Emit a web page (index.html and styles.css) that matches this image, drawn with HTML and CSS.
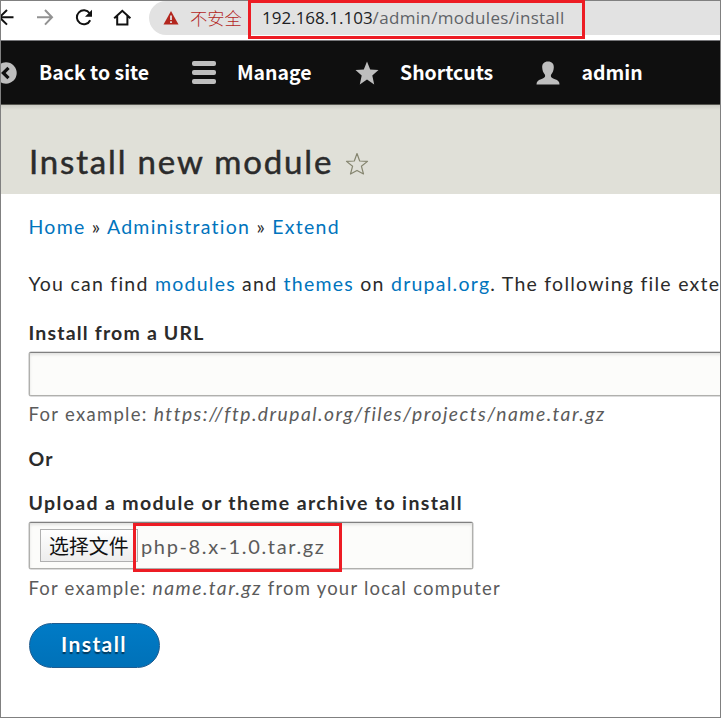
FILE: index.html
```
<!DOCTYPE html>
<html lang="en">
<head>
<meta charset="utf-8">
<title>Install new module</title>
<link rel="stylesheet" href="styles.css">
</head>
<body>
<div class="window">
  <div class="browser">
    <svg class="nav" width="132" height="40" viewBox="0 0 132 40" fill="none" stroke="#111" stroke-width="2">
      <path d="M13.500 17.300H-1M7 10L-.5 17.300L7 24.600"/>
      <path stroke="#929292" d="M37 17.300H51.500M45 10L52 17.300L45 24.600"/>
      <path d="M89.600 13.300A7 7 0 1 0 90.200 20.300"/>
      <path fill="#111" stroke="none" d="M92 9.800V16.800H85z"/>
      <path d="M114.200 18.300L122.300 10.800L130.400 18.300M117.200 16V24.500H127.400V16"/>
    </svg>
    <div class="omnibox">
      <svg class="warn" width="16" height="14" viewBox="0 0 16 14"><path fill="#b3261e" d="M8 0L15.500 13.500H.5z"/><path stroke="#e2e2e2" stroke-width="1.800" d="M8 4.500V9M8 10.200V12"/></svg>
      <span class="insecure" lang="zh">不安全</span>
      <span class="address"><span class="host">192.168.1.103</span><span class="path">/admin/modules/install</span></span>
    </div>
  </div>
  <nav class="toolbar">
    <a class="tab back"><svg width="17" height="22" viewBox="0 0 17 22"><circle cx="6" cy="11" r="10.700" fill="#bebebe"/><path d="M8.500 5.800L3.300 11L8.500 16.200" fill="none" stroke="#0f0f0f" stroke-width="3.200"/></svg><span>Back to site</span></a>
    <a class="tab manage"><svg width="26" height="24" viewBox="0 0 26 24"><g fill="#bebebe"><rect x="1" y="0" width="24" height="5" rx="2"/><rect x="1" y="9" width="24" height="5" rx="2"/><rect x="1" y="18" width="24" height="5" rx="2"/></g></svg><span>Manage</span></a>
    <a class="tab shortcuts"><svg width="24" height="24" viewBox="0 0 24 24"><path fill="#bebebe" d="M12 .5L15.200 8.400L23.500 9L17.300 14.500L19.200 23.500L12 18.600L4.800 23.500L6.700 14.500L.5 9L8.800 8.400z"/></svg><span>Shortcuts</span></a>
    <a class="tab user"><svg width="24" height="24" viewBox="0 0 24 24"><path fill="#bebebe" d="M12 .5C8 .5 6 3 6.200 6.500C6.300 9.500 7.300 11.500 8.800 13.500C9.800 16 8.500 17 5 18.300C2 19.400.5 20.500.5 23.500H23.500C23.500 20.500 22 19.400 19 18.300C15.500 17 14.200 16 15.200 13.500C16.700 11.500 17.700 9.500 17.800 6.500C18 3 16 .5 12 .5z"/></svg><span>admin</span></a>
  </nav>
  <header class="page-header">
    <h1>Install new module</h1>
    <svg width="24" height="24" viewBox="0 0 24 24"><path fill="none" stroke="#85856f" stroke-width="1.200" stroke-linejoin="round" d="M12 1.500L14.700 9L22.500 9.400L16.400 14.200L18.500 22L12 18.400L5.500 22L7.600 14.200L1.500 9.400L9.300 9z"/></svg>
  </header>
  <main>
    <div class="breadcrumb"><a>Home</a> » <a>Administration</a> » <a>Extend</a></div>
    <p class="intro">You can find <a>modules</a> and <a>themes</a> on <a>drupal.org</a>. The following file exte</p>
    <div class="label">Install from a URL</div>
    <div class="field url-field"></div>
    <div class="description">For example: <em>https://ftp.drupal.org/files/projects/name.tar.gz</em></div>
    <div class="label or">Or</div>
    <div class="label upload">Upload a module or theme archive to install</div>
    <div class="field file-field">
      <span class="choose" lang="zh">选择文件</span><span class="filename">php-8.x-1.0.tar.gz</span>
      <div class="mark file-mark"></div>
    </div>
    <div class="description local">For example: <em>name.tar.gz</em> from your local computer</div>
    <div class="submit">Install</div>
  </main>
  <div class="mark address-mark"></div>
</div>
</body>
</html>
```
FILE: styles.css
```
* { box-sizing: border-box; }
body { margin: 0; }
.window {
  position: relative;
  width: 721px;
  height: 718px;
  overflow: hidden;
  background: #fff;
  color: #2b2b2b;
  font: 19.500px/26px Lato, "Noto Sans CJK SC", sans-serif;
  letter-spacing: 1.180px;
  white-space: nowrap;
}
.window::after {
  content: "";
  position: absolute;
  inset: 0;
  border: 1px solid #808080;
}
svg { flex: none; display: block; }
.browser { display: flex; height: 40px; }
.omnibox {
  display: flex;
  align-items: center;
  height: 34px;
  width: 600px;
  margin: 1px 0 0 17px;
  padding-left: 14px;
  border-radius: 17px 0 0 17px;
  background: #e2e2e2;
  font: 17px/34px "Open Sans", "Noto Sans CJK SC", sans-serif;
  letter-spacing: 0;
}
.insecure { margin-left: 11px; width: 72px; color: #b3261e; font-family: "Noto Sans CJK SC", sans-serif; font-size: 17.300px; font-weight: 300; }
.address { color: #5f6368; }
.host { color: #202124; }
.path { letter-spacing: .330px; }
.toolbar {
  display: flex;
  align-items: center;
  height: 65px;
  border-top: 1px solid #77777a;
  border-bottom: 1px solid #55554f;
  background: #0f0f0f;
  color: #fff;
  font: bold 19.450px/28px "Noto Sans CJK SC", sans-serif;
  letter-spacing: 0;
}
.tab { display: flex; align-items: center; }
.tab span { padding-bottom: 1px; }
.back { width: 191px; gap: 22px; }
.manage { width: 164px; gap: 20px; }
.shortcuts { width: 181px; gap: 21px; }
.user { gap: 21.500px; }
.page-header {
  display: flex;
  align-items: center;
  gap: 12px;
  height: 89px;
  padding: 28px 0 0 29px;
  background: linear-gradient(#cbcbc4, #e0e0d8 5px);
}
h1 {
  margin: -5px 0 0;
  font-size: 33px;
  line-height: 42px;
  font-weight: 400;
  letter-spacing: 1.830px;
  -webkit-text-stroke: .500px #2b2b2b;
}
main { padding: 20px 0 0 28.500px; }
a { color: #0074bd; }
.tab { color: #fff; }
.breadcrumb, .intro { letter-spacing: 1.250px; }
.intro { margin: 31px 0 0; }
.label { margin-top: 23px; font-weight: 700; }
.field {
  border: 1px solid #b0b0ad;
  border-top-color: #808080;
  border-radius: 2px;
  background: #fcfcfa;
  box-shadow: inset 0 2px 3px rgba(0, 0, 0, .1), 0 0 0 .500px #b9b9b9;
}
.url-field { width: 710px; height: 44px; margin-top: 6px; }
.description { margin-top: 5px; font-size: 18.500px; letter-spacing: 1.300px; color: #5b5b5b; }
em { font-size: 19.300px; letter-spacing: 1.470px; }
.or { margin-top: 19px; }
.upload { margin-top: 18px; letter-spacing: 1.360px; }
.file-field {
  position: relative;
  display: flex;
  width: 444px;
  height: 47px;
  margin-top: 6px;
  padding: 6px 0 0 10.500px;
}
.choose {
  width: 98px;
  height: 33px;
  padding-left: 8px;
  border: 1px solid #b0b0b0;
  background: linear-gradient(#fff, #ededed);
  color: #111;
  font: 19.900px/32px "Noto Sans CJK SC", sans-serif;
  letter-spacing: 0;
}
.filename { margin-left: 3px; font-size: 20px; line-height: 35px; letter-spacing: 1.650px; color: #5b5b5b; }
.local { margin-top: 6px; letter-spacing: 1.210px; }
.mark { position: absolute; border: 3px solid #ed1c24; z-index: 1; }
.file-mark { left: 103.500px; top: 0; width: 209px; height: 49px; }
.address-mark { left: 248px; top: 0; width: 337px; height: 39px; }
.submit {
  width: 131px;
  height: 45px;
  margin-top: 22px;
  border: 1px solid #1e5c90;
  border-radius: 23px;
  background: linear-gradient(#007bc6, #0071b8);
  color: #fff;
  font-size: 21px;
  font-weight: 700;
  line-height: 40px;
  letter-spacing: 1.400px;
  text-align: center;
  text-shadow: 0 2px 1px rgba(0, 0, 0, .5);
}
```
